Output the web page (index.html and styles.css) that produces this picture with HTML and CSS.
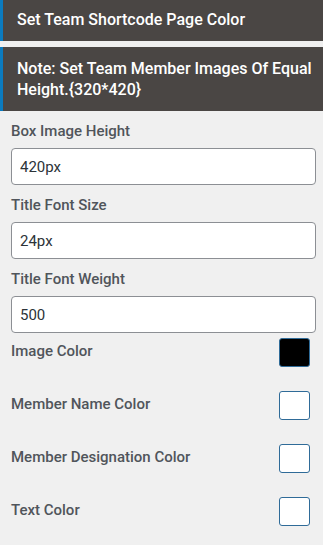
FILE: index.html
```html
<!DOCTYPE html>
<html>
<head>
<meta charset="utf-8">
<link rel="stylesheet" href="styles.css">
</head>
<body>
<div class="panel">
  <div class="bar bar-single">Set Team Shortcode Page Color</div>
  <div class="bar bar-note">Note: Set Team Member Images Of Equal Height.{320*420}</div>
  <div class="content">
    <div class="field">
      <label class="label">Box Image Height</label>
      <input class="input" type="text" value="420px">
    </div>
    <div class="field">
      <label class="label">Title Font Size</label>
      <input class="input" type="text" value="24px">
    </div>
    <div class="field">
      <label class="label">Title Font Weight</label>
      <input class="input" type="text" value="500">
    </div>
    <div class="colors">
      <div class="color-row">
        <span class="label">Image Color</span>
        <span class="swatch swatch-black"></span>
      </div>
      <div class="color-row">
        <span class="label">Member Name Color</span>
        <span class="swatch"></span>
      </div>
      <div class="color-row">
        <span class="label">Member Designation Color</span>
        <span class="swatch"></span>
      </div>
      <div class="color-row">
        <span class="label">Text Color</span>
        <span class="swatch"></span>
      </div>
    </div>
  </div>
</div>
</body>
</html>
```

FILE: styles.css
```css
html, body {
  margin: 0;
  padding: 0;
  background: #f0f0f0;
}
body {
  font-family: Roboto, "Liberation Sans", sans-serif;
}
.bar {
  background: #4a4644;
  color: #ffffff;
  border-left: 3px solid #0b7bbf;
  font-size: 16px;
  font-weight: 500;
  line-height: 21px;
  padding: 0 10px 0 14px;
}
.bar-single {
  height: 41px;
  display: flex;
  align-items: center;
  box-sizing: border-box;
  padding-bottom: 3px;
}
.bar-note {
  margin-top: 6px;
  padding-top: 11px;
  padding-bottom: 11px;
  height: 64px;
  box-sizing: border-box;
}
.content {
  padding: 10px 7px 0 11px;
}
.field {
  margin-bottom: 10px;
}
.label {
  display: block;
  font-size: 15px;
  line-height: 20px;
  font-weight: 500;
  color: #50555b;
  margin-bottom: 7px;
}
.input {
  display: block;
  box-sizing: border-box;
  width: 100%;
  height: 37px;
  margin: 0;
  padding: 0 8px;
  border: 1px solid #8c8f94;
  border-radius: 4px;
  background: #ffffff;
  font-family: Roboto, "Liberation Sans", sans-serif;
  font-size: 15px;
  color: #2c3338;
  outline: none;
}
.colors {
  margin-top: -5px;
  display: flex;
  flex-direction: column;
  gap: 24px;
}
.color-row {
  display: flex;
  justify-content: space-between;
  align-items: flex-start;
  padding-right: 6px;
}
.color-row .label {
  margin: 3px 0 0;
}
.swatch {
  display: block;
  box-sizing: border-box;
  width: 31px;
  height: 29px;
  border: 1px solid #2f6b98;
  border-radius: 3px;
  background: #ffffff;
}
.swatch-black {
  background: #000000;
}
```
